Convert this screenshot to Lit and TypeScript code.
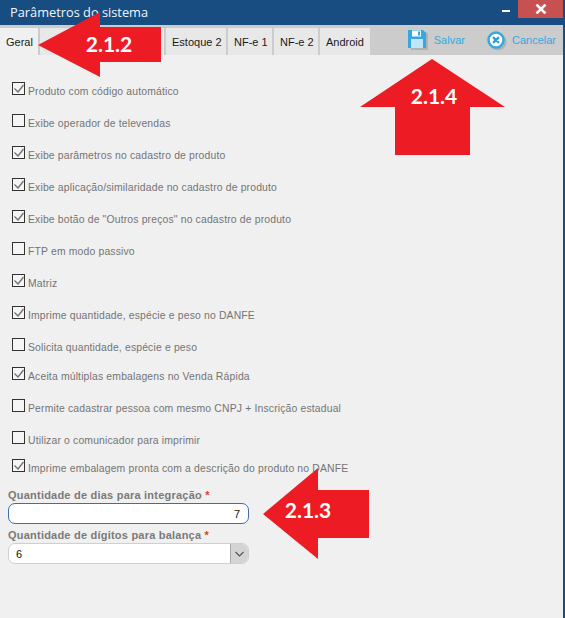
import { LitElement, html, css, svg } from "lit";
import { customElement } from "lit/decorators.js";

const ROWS: { t: string; c: boolean; h?: string }[] = [
  { t: "Produto com código automático", c: true },
  { t: "Exibe operador de televendas", c: false },
  { t: "Exibe parâmetros no cadastro de produto", c: true },
  { t: "Exibe aplicação/similaridade no cadastro de produto", c: true },
  { t: 'Exibe botão de "Outros preços" no cadastro de produto', c: true },
  { t: "FTP em modo passivo", c: false },
  { t: "Matriz", c: true },
  { t: "Imprime quantidade, espécie e peso no DANFE", c: true },
  { t: "Solicita quantidade, espécie e peso", c: false, h: "h29" },
  { t: "Aceita múltiplas embalagens no Venda Rápida", c: true },
  { t: "Permite cadastrar pessoa com mesmo CNPJ + Inscrição estadual", c: false },
  { t: "Utilizar o comunicador para imprimir", c: false, h: "h28" },
  { t: "Imprime embalagem pronta com a descrição do produto no DANFE", c: true },
];

const floppy = svg`<svg class="ico" width="22" height="22" viewBox="0 0 22 22">
  <path d="M3 3h16l2 2v16H4z" fill="#9a9a9a" opacity=".55"/>
  <path d="M1 1h15l3 3v15H1z" fill="#35a8e0"/>
  <rect x="5" y="1.5" width="9" height="6" fill="#fff"/>
  <rect x="11" y="2.5" width="2" height="4" fill="#35a8e0"/>
  <rect x="4" y="10" width="12" height="9" fill="#bfe6f8"/>
</svg>`;
const cancel = svg`<svg class="ico" width="22" height="22" viewBox="0 0 22 22">
  <circle cx="11" cy="13" r="8.5" fill="#9a9a9a" opacity=".55"/>
  <circle cx="9" cy="11" r="7.5" fill="#fff" stroke="#35a8e0" stroke-width="2.4"/>
  <path d="M6.8 8.8l4.4 4.4m0-4.4l-4.4 4.4" stroke="#2f9fd8" stroke-width="2.4" stroke-linecap="round"/>
</svg>`;

@customElement("app-root")
export class AppRoot extends LitElement {
  static styles = css`
    :host {
      display: block;
      width: 565px;
      height: 618px;
      box-sizing: border-box;
      border-right: 2px solid #174d80;
      position: relative;
      overflow: hidden;
      background: #f0f0f0;
      font-family: "Liberation Sans", Arial, sans-serif;
    }
    .title {
      height: 25px;
      background: #174d80;
      display: flex;
      align-items: flex-start;
      color: #fff;
    }
    .title h1 {
      margin: 0;
      padding: 4px 0 0 10px;
      flex: 1;
      font: 400 12.8px/17px "Open Sans", sans-serif;
      color: #f2f6fa;
    }
    .min {
      width: 8px;
      height: 2px;
      background: #fff;
      margin: 10px 8px 0 0;
    }
    .close {
      width: 45px;
      height: 18px;
      background: #c75050;
      display: flex;
      align-items: center;
      justify-content: center;
    }
    .bar {
      height: 30px;
      background: #cccccc;
      display: flex;
      align-items: flex-end;
    }
    .tab {
      height: 27px;
      box-sizing: border-box;
      padding: 0 6px;
      margin-right: 2px;
      background: #e8e8e8;
      font-size: 11px;
      line-height: 29px;
      color: #1a1a1a;
      white-space: nowrap;
    }
    .tab.on { background: #f0f0f0; width: 38px; }
    .tab.w2 { width: 61px; }
    .tab.w3 { width: 60px; }
    .tab.w4 { width: 44px; }
    .tab.w5 { width: 50px; margin-right: 0; }
    .acts {
      margin-left: auto;
      height: 30px;
      display: flex;
      align-items: flex-start;
    }
    .act {
      display: flex;
      align-items: flex-start;
      color: #35a8e0;
      font-size: 11px;
      line-height: 13px;
    }
    .act span { padding-top: 9px; }
    .act .ico { margin: 4px 5px 0 0; display: block; }
    .act.save { margin-right: 22px; }
    .act.cancel { margin-right: 7px; }
    .act.cancel .ico { margin-right: 3px; }
    .form { padding: 24px 0 0 8px; }
    .row {
      display: flex;
      align-items: flex-start;
      height: 32px;
      padding-left: 4px;
      color: #747474;
      letter-spacing: 0.01em;
    }
    .row.h29 { height: 29px; }
    .row.h28 { height: 28px; }
    .row span { padding-top: 6px; line-height: 13px; font-size: 10.4px; }
    .box {
      width: 11px;
      height: 11px;
      margin: 3px 3px 0 0;
      border: 1px solid #333;
      background: #f5f5f5;
      flex: none;
      display: block;
    }
    .box svg { display: block; }
    label.f {
      display: block;
      font-size: 11px;
      font-weight: 700;
      line-height: 15px;
      color: #7a7a7a;
      letter-spacing: 0.02em;
    }
    label.f i { color: #e23a1c; font-style: normal; }
    .input {
      width: 241px;
      height: 21px;
      box-sizing: border-box;
      margin-bottom: 4px;
      border: 1px solid #3b6fa8;
      border-radius: 7px;
      background: #fff;
      font-size: 11px;
      line-height: 20px;
      text-align: right;
      padding-right: 8px;
      color: #111;
    }
    .select {
      width: 241px;
      height: 21px;
      box-sizing: border-box;
      border: 1px solid #cfcfcf;
      border-radius: 7px;
      background: #fff;
      font-size: 11px;
      line-height: 20px;
      padding-left: 7px;
      color: #111;
      display: flex;
      justify-content: space-between;
      overflow: hidden;
    }
    .caret {
      width: 17px;
      background: #d4d4d4;
      border-left: 1px solid #a8a8a8;
      display: flex;
      align-items: center;
      justify-content: center;
    }
    .marks { position: absolute; inset: 0; pointer-events: none; }
    .marks text {
      font: 700 21px "Lato", sans-serif;
      fill: #fff;
      text-anchor: middle;
    }
  `;

  render() {
    return html`
      <div class="title">
        <h1>Parâmetros do sistema</h1>
        <div class="min"></div>
        <div class="close">
          <svg width="12" height="10" viewBox="0 0 12 10"><path d="M1.5 .5l9 9m0-9l-9 9" stroke="#fff" stroke-width="2.6"/></svg>
        </div>
      </div>
      <div class="bar">
        <div class="tab on">Geral</div>
        <div class="tab w2"></div>
        <div class="tab w2"></div>
        <div class="tab w3">Estoque 2</div>
        <div class="tab w4">NF-e 1</div>
        <div class="tab w4">NF-e 2</div>
        <div class="tab w5">Android</div>
        <div class="acts">
          <div class="act save">${floppy}<span>Salvar</span></div>
          <div class="act cancel">${cancel}<span>Cancelar</span></div>
        </div>
      </div>
      <div class="form">
        ${ROWS.map(
          (r) => html`<div class="row ${r.h ?? ""}">
            <div class="box">
              ${r.c
                ? html`<svg width="11" height="11" viewBox="0 0 11 11"><path d="M1.5 5.5L5 9l5.5-7" fill="none" stroke="#6f6f6f" stroke-width="1.3"/></svg>`
                : ""}
            </div>
            <span>${r.t}</span>
          </div>`
        )}
        <label class="f">Quantidade de dias para integração <i>*</i></label>
        <div class="input">7</div>
        <label class="f">Quantidade de dígitos para balança <i>*</i></label>
        <div class="select">
          <span>6</span>
          <div class="caret">
            <svg width="9" height="6" viewBox="0 0 9 6"><path d="M.5 1l4 4 4-4" fill="none" stroke="#555" stroke-width="1.2"/></svg>
          </div>
        </div>
      </div>
      <svg class="marks" width="565" height="618" viewBox="0 0 565 618">
        <path fill="#ed1c24" d="M38 45L100 12V27H161V62H100V77Z"/>
        <text x="109" y="52">2.1.2</text>
        <path fill="#ed1c24" d="M432 59L505 107H470V155H395V107H360Z"/>
        <text x="434" y="104">2.1.4</text>
        <path fill="#ed1c24" d="M263 514L318 468V490H369V538H318V559Z"/>
        <text x="308" y="518">2.1.3</text>
      </svg>
    `;
  }
}
